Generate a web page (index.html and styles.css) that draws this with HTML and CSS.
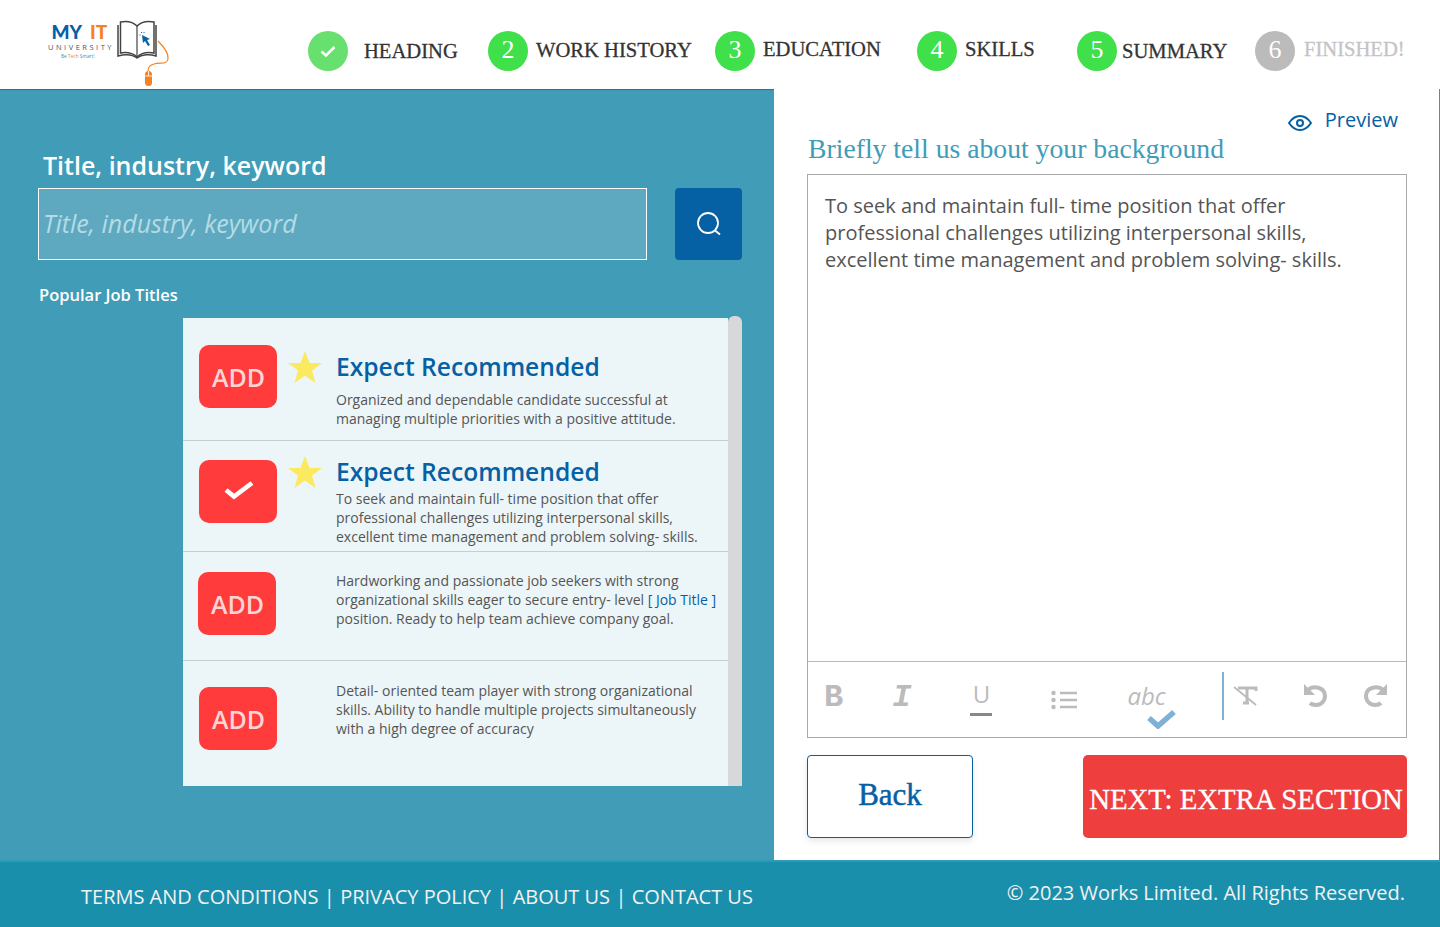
FILE: index.html
```html
<!DOCTYPE html>
<html lang="en">
<head>
  <meta charset="UTF-8">
  <title>MY IT University - Summary</title>
  <link rel="stylesheet" href="styles.css">
</head>
<body>

<div class="page">
  <header class="topbar">
    <svg class="logo" viewBox="40 15 135 74" width="135" height="74">
      <text x="51.500" y="39" class="logo-my">MY</text>
      <text x="90" y="39" class="logo-it">IT</text>
      <text x="48" y="50" class="logo-uni">UNIVERSITY</text>
      <text x="61" y="58" class="logo-tag">Be <tspan fill="#f5821f">Tech</tspan> Smart!</text>
      <path d="M118 25v31c7-2 14-2 19 2 5-4 13-4 19-2V25" fill="none" stroke="#444" stroke-width="1.5"/>
      <path d="M120.500 22v31c6-1 12 0 16.500 4 4-4 11-5 17-4V22c-6-1-13 0-17 4-4-4-11-5-16.500-4z" fill="#fff" stroke="#444" stroke-width="1.500"/>
      <path d="M137 26v31" stroke="#444" stroke-width="1.200"/>
      <path d="M142 35l8 4-3 1 3 5-2 1-3-5-2 2z" fill="#0560a4"/>
      <path d="M141 32l1 1M144 32v1M139.500 35h1" stroke="#0560a4" stroke-width="1"/>
      <path d="M158 41c4 4 11 12 10 18-1 6-8 3-14 5-4 1-6 3-6 7" fill="none" stroke="#f5821f" stroke-width="1.200"/>
      <rect x="145" y="71" width="7" height="15" rx="3.500" fill="#f5821f"/>
      <path d="M145 76h7M148.500 71v5" stroke="#fff" stroke-width="0.800"/>
    </svg>

    <div class="steps">
      <div class="step step-one">
        <span class="circle circle-done">
          <svg viewBox="0 0 16 16" width="16" height="16"><path d="M1.500 8.500l4.500 4 8.500-8.500" fill="none" stroke="#fff" stroke-width="2.600"/></svg>
        </span>
        <span class="step-label label-low label-wide">HEADING</span>
      </div>
      <div class="step step-two">
        <span class="circle">2</span>
        <span class="step-label">WORK HISTORY</span>
      </div>
      <div class="step step-three">
        <span class="circle">3</span>
        <span class="step-label label-high">EDUCATION</span>
      </div>
      <div class="step step-four">
        <span class="circle">4</span>
        <span class="step-label label-high">SKILLS</span>
      </div>
      <div class="step step-five">
        <span class="circle">5</span>
        <span class="step-label label-low label-tight">SUMMARY</span>
      </div>
      <div class="step step-six">
        <span class="circle circle-off">6</span>
        <span class="step-label label-high label-off">FINISHED!</span>
      </div>
    </div>
  </header>

  <main class="content">
    <section class="left-panel">
      <h2 class="search-title">Title, industry, keyword</h2>
      <div class="search-row">
        <input class="search-input" placeholder="Title, industry, keyword">
        <button class="search-btn">
          <svg viewBox="0 0 26 26" width="26" height="26"><circle cx="12" cy="12" r="10" fill="none" stroke="#fff" stroke-width="1.800"/><path d="M19 19.500l5 4" stroke="#fff" stroke-width="1.800"/></svg>
        </button>
      </div>
      <h3 class="popular-title">Popular Job Titles</h3>

      <div class="list-wrap">
        <div class="job-list">
          <div class="job-row row-one">
            <button class="add-btn">ADD</button>
            <svg class="star" viewBox="0 0 34 32" width="34" height="32"><path d="M17 0l4.500 12H34l-10 7.500L27.500 32 17 24.500 6.500 32 10 19.500 0 12h12.500z" fill="#fbe95f"/></svg>
            <div class="job-text">
              <div class="job-name">Expect Recommended</div>
              <p class="job-desc job-desc-gap">Organized and dependable candidate successful at managing multiple priorities with a positive attitude.</p>
            </div>
          </div>
          <div class="job-row row-two">
            <button class="add-btn">
              <svg class="added-check" viewBox="0 0 32 20" width="32" height="20"><path d="M3 10l8 6.500L29 3" fill="none" stroke="#fff" stroke-width="4.600"/></svg>
            </button>
            <svg class="star" viewBox="0 0 34 32" width="34" height="32"><path d="M17 0l4.500 12H34l-10 7.500L27.500 32 17 24.500 6.500 32 10 19.500 0 12h12.500z" fill="#fbe95f"/></svg>
            <div class="job-text">
              <div class="job-name">Expect Recommended</div>
              <p class="job-desc">To seek and maintain full- time position that offer professional challenges utilizing interpersonal skills, excellent time management and problem solving- skills.</p>
            </div>
          </div>
          <div class="job-row row-three">
            <button class="add-btn">ADD</button>
            <div class="job-text no-star">
              <p class="job-desc">Hardworking and passionate job seekers with strong organizational skills eager to secure entry- level <span class="job-link">[ Job Title ]</span> position. Ready to help team achieve company goal.</p>
            </div>
          </div>
          <div class="job-row row-four">
            <button class="add-btn">ADD</button>
            <div class="job-text no-star">
              <p class="job-desc">Detail- oriented team player with strong organizational skills. Ability to handle multiple projects simultaneously with a high degree of accuracy</p>
            </div>
          </div>
        </div>
        <div class="scrollbar"></div>
      </div>
    </section>

    <section class="right-panel">
      <div class="preview">
        <svg viewBox="0 0 24 16" width="24" height="16"><path d="M1 8c3-4.500 7-7 11-7s8 2.500 11 7c-3 4.500-7 7-11 7S4 12.500 1 8z" fill="none" stroke="#0560a4" stroke-width="2"/><circle cx="12" cy="8" r="3" fill="none" stroke="#0560a4" stroke-width="2"/></svg>
        <span>Preview</span>
      </div>
      <h2 class="editor-title">Briefly tell us about your background</h2>

      <div class="editor">
        <div class="editor-text">To seek and maintain full- time position that offer professional challenges utilizing interpersonal skills, excellent time management and problem solving- skills.</div>
        <div class="toolbar">
          <span class="tool tool-b">B</span>
          <span class="tool tool-i">I</span>
          <span class="tool tool-u">U</span>
          <svg class="tool-list" viewBox="0 0 26 20" width="26" height="20">
            <circle cx="2.500" cy="3" r="2.200" fill="#bbb"/><circle cx="2.500" cy="10" r="2.200" fill="#bbb"/><circle cx="2.500" cy="17" r="2.200" fill="#bbb"/>
            <path d="M9 3h17M9 10h17M9 17h17" stroke="#bbb" stroke-width="2.400"/>
          </svg>
          <span class="tool-abc">abc
            <svg class="abc-check" viewBox="0 0 30 20" width="30" height="20"><path d="M2 9l9 8L27 3" fill="none" stroke="#7fb0d6" stroke-width="5.500"/></svg>
          </span>
          <span class="divider"></span>
          <svg class="tool-clear" viewBox="0 0 26 22" width="26" height="22">
            <path d="M5 3h18v3M14 3v15M10 18h6" fill="none" stroke="#bbb" stroke-width="3"/>
            <path d="M1 2l22 18" stroke="#bbb" stroke-width="1.800"/>
          </svg>
          <svg class="tool-undo" viewBox="0 0 24 24" width="24" height="24">
            <path d="M5 7c5-5 17-3 17 6 0 5-4 9-9 9-3 0-5-1-6-2" fill="none" stroke="#bbb" stroke-width="4"/>
            <path d="M1 1l0 11h11z" fill="#bbb"/>
          </svg>
          <svg class="tool-redo" viewBox="0 0 24 24" width="24" height="24">
            <path d="M19 7C14 2 2 4 2 13c0 5 4 9 9 9 3 0 5-1 6-2" fill="none" stroke="#bbb" stroke-width="4"/>
            <path d="M23 1v11H12z" fill="#bbb"/>
          </svg>
        </div>
      </div>

      <div class="actions">
        <button class="back-btn">Back</button>
        <button class="next-btn">NEXT: EXTRA SECTION</button>
      </div>
    </section>
  </main>

  <footer class="footer">
    <div class="footer-links">
      <a>TERMS AND CONDITIONS</a><span>|</span><a>PRIVACY POLICY</a><span>|</span><a>ABOUT US</a><span>|</span><a>CONTACT US</a>
    </div>
    <div class="copyright">© 2023 Works Limited. All Rights Reserved.</div>
  </footer>
</div>

</body>
</html>
```

FILE: styles.css
```css
* {
  box-sizing: border-box;
}
body {
  margin: 0;
  font-family: 'Open Sans', sans-serif;
  background: #fff;
}
.page {
  display: flex;
  flex-direction: column;
  height: 927px;
  overflow: hidden;
}

/* top bar */
.topbar {
  display: flex;
  height: 89px;
  flex-shrink: 0;
  background: #fff;
}
.logo {
  margin: 15px 0 0 40px;
  flex-shrink: 0;
}
.logo-my {
  font: 900 19px Lato, sans-serif;
  fill: #0560a4;
}
.logo-it {
  font: 900 19px Lato, sans-serif;
  fill: #f5821f;
}
.logo-uni {
  font: 400 7.500px 'Open Sans', sans-serif;
  letter-spacing: 2.500px;
  fill: #555;
}
.logo-tag {
  font: 400 4.800px 'Open Sans', sans-serif;
  fill: #3d8fc4;
}
.steps {
  display: flex;
  margin-left: 133px;
  padding-top: 31px;
}
.step {
  display: flex;
  height: 38px;
  align-items: center;
}
.step-one { width: 180px; }
.step-two { width: 227px; }
.step-three { width: 202px; }
.step-four { width: 160px; }
.step-five { width: 178px; }
.circle {
  width: 40px;
  height: 40px;
  flex-shrink: 0;
  margin-bottom: -2px;
  border-radius: 50%;
  background: #3fe04a;
  color: #fff;
  font: 26px 'Liberation Serif', serif;
  display: flex;
  align-items: center;
  justify-content: center;
  padding-bottom: 2px;
}
.circle-done {
  background: #67e06f;
  padding-bottom: 0;
}
.circle-off {
  background: #bbb;
}
.step-label {
  margin-left: 8px;
  font: 20.600px 'Liberation Serif', serif;
  color: #333;
  -webkit-text-stroke: 0.3px #333;
  white-space: nowrap;
}
.label-wide {
  margin-left: 16px;
  position: relative;
  top: 1px;
}
.label-low {
  position: relative;
  top: 1px;
}
.label-high {
  position: relative;
  top: -1px;
}
.label-tight {
  margin-left: 5px;
}
.label-off {
  margin-left: 9px;
  color: #c4c4c4;
  -webkit-text-stroke: 0.3px #c4c4c4;
}

/* main area */
.content {
  display: flex;
  flex: 1;
  min-height: 0;
}
.left-panel {
  width: 774px;
  flex-shrink: 0;
  background: #409cb7;
  box-shadow: inset 0 2px 1px -1px #2f7086;
  padding: 60px 32px 0 38px;
}
.search-title {
  margin: 0 0 7px 5px;
  font-size: 25px;
  line-height: 32px;
  font-weight: 600;
  color: #fff;
}
.search-row {
  display: flex;
  justify-content: space-between;
}
.search-input {
  width: 609px;
  height: 72px;
  padding: 0 4px 2px;
  background: #5fa9c0;
  border: 1px solid #fff;
  font: italic 25px 'Open Sans', sans-serif;
  color: #fff;
}
.search-input::placeholder {
  color: #b5dbe6;
  opacity: 1;
}
.search-btn {
  width: 67px;
  height: 72px;
  border: 0;
  border-radius: 4px;
  background: #0560a4;
  padding: 0;
  display: flex;
  align-items: center;
  justify-content: center;
}
.popular-title {
  margin: 24px 0 0 1px;
  font-size: 16.500px;
  line-height: 22px;
  font-weight: 600;
  color: #fff;
}
.list-wrap {
  display: flex;
  margin: 10px 0 0 145px;
  height: 470px;
}
.job-list {
  width: 545px;
  margin-top: 2px;
  background: #ecf5f8;
}
.scrollbar {
  width: 14px;
  background: #d8d8d8;
  border-radius: 6px 6px 0 0;
}
.job-row {
  display: flex;
  align-items: flex-start;
  padding-left: 16px;
  border-bottom: 1px solid #c4ced3;
}
.row-one { height: 123px; padding-top: 27px; }
.row-two { height: 111px; padding-top: 19px; }
.row-three { height: 109px; padding-top: 20px; padding-left: 15px; }
.row-four { height: 125px; padding-top: 26px; border-bottom: 0; }
.add-btn {
  width: 78px;
  height: 63px;
  flex-shrink: 0;
  border: 0;
  border-radius: 10px;
  background: #ff3b3b;
  color: #fbd5d5;
  font: 600 25px 'Open Sans', sans-serif;
  padding: 0 0 0 1px;
  display: flex;
  align-items: center;
  justify-content: center;
}
.added-check {
  margin-bottom: 3px;
}
.star {
  margin: 6px 0 0 11px;
  flex-shrink: 0;
}
.row-two .star {
  margin-top: -4px;
}
.job-text {
  margin-left: 14px;
}
.row-one .job-text { margin-top: 5px; }
.row-two .job-text { margin-top: -5px; }
.no-star {
  margin-left: 59px;
}
.row-three .no-star { margin-left: 60px; margin-top: -1px; }
.row-four .no-star { margin-top: -6px; }
.job-name {
  font-size: 24.600px;
  line-height: 34px;
  font-weight: 600;
  color: #0560a4;
}
.job-desc {
  margin: 0;
  width: 384px;
  font-size: 14px;
  line-height: 19px;
  color: #555;
}
.job-desc-gap {
  margin-top: 6px;
}
.job-link {
  color: #0560a4;
}

/* right side */
.right-panel {
  flex: 1;
  border-right: 1px solid #4a93ab;
  padding: 17px 32px 0 33px;
}
.preview {
  display: flex;
  justify-content: flex-end;
  align-items: center;
  gap: 13px;
  height: 26px;
  padding-right: 9px;
  font-size: 20px;
  color: #0560a4;
}
.preview svg {
  margin-top: 8px;
}
.editor-title {
  margin: 0 0 8px 1px;
  font: 400 27.700px/34px 'Liberation Serif', serif;
  color: #409cb7;
}
.editor {
  height: 564px;
  border: 1px solid #aaa;
  display: flex;
  flex-direction: column;
}
.editor-text {
  flex: 1;
  padding: 17px 40px 0 17px;
  font-size: 20px;
  line-height: 27px;
  color: #555;
}
.toolbar {
  height: 76px;
  flex-shrink: 0;
  border-top: 1px solid #bbb;
  display: flex;
  align-items: flex-start;
  color: #bbb;
}
.tool {
  font-family: 'Liberation Mono', monospace;
  font-weight: 700;
  font-size: 32px;
  line-height: 34px;
  margin-top: 19px;
}
.tool-b { margin-left: 16px; }
.tool-i { margin-left: 49px; font-style: italic; }
.tool-u {
  margin-top: 17px;
  margin-left: 59px;
  height: 37px;
  font: 400 24px/30px 'Open Sans', sans-serif;
  padding: 0 1px;
  width: 22px;
  text-align: center;
  border-bottom: 3px solid #888;
}
.tool-list { margin: 28px 0 0 59px; }
.tool-abc {
  position: relative;
  margin: 19px 0 0 50px;
  font: italic 400 24px/30px 'Open Sans', sans-serif;
  width: 60px;
}
.abc-check {
  position: absolute;
  left: 20px;
  top: 28px;
}
.divider {
  width: 2px;
  height: 48px;
  margin: 10px 0 0 35px;
  background: #7fb0d6;
}
.tool-clear { margin: 23px 0 0 9px; }
.tool-undo { margin: 21px 0 0 44px; }
.tool-redo { margin: 21px 0 0 37px; }
.actions {
  display: flex;
  justify-content: space-between;
  margin-top: 17px;
}
.back-btn {
  width: 166px;
  height: 83px;
  background: #fff;
  border: 1px solid #0560a4;
  border-radius: 4px;
  box-shadow: 0 3px 6px rgba(0,0,0,0.1);
  color: #0560a4;
  font: 400 31px 'Liberation Serif', serif;
  -webkit-text-stroke: 0.5px #0560a4;
  padding: 0 0 4px;
}
.next-btn {
  width: 324px;
  height: 83px;
  background: #ef3e3e;
  border: 0;
  border-radius: 5px;
  color: #fff;
  font: 28.800px 'Liberation Serif', serif;
  -webkit-text-stroke: 0.3px #fff;
  white-space: nowrap;
  padding: 6px 0 0 2px;
}

/* footer */
.footer {
  height: 67px;
  flex-shrink: 0;
  background: #1a8fac;
  border-top: 2px solid #2d9bb7;
  padding: 0 35px 0 81px;
  display: flex;
  justify-content: space-between;
  color: #f2f2f2;
  font-size: 20px;
}
.footer-links {
  display: flex;
  gap: 5.300px;
  padding-top: 21px;
}
.copyright {
  padding-top: 17px;
}
```
